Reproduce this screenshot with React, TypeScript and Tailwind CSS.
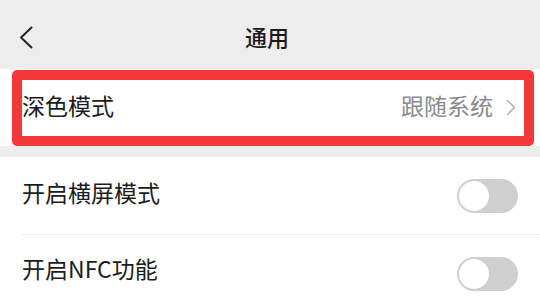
import React from 'react';

const font = { fontFamily: '"Noto Sans CJK SC", "Noto Sans", sans-serif' };

const Toggle: React.FC = () => (
  <div className="w-[61px] h-[34px] rounded-full bg-[#cfcfcf] p-[2px] flex items-center">
    <div className="w-[30px] h-[30px] rounded-full bg-white" />
  </div>
);

const SwitchRow: React.FC<{ label: string; lift: string }> = ({ label, lift }) => (
  <div className="h-[77px] flex items-center justify-between pl-[22px] pr-[22px]">
    <span className={`text-[23px] leading-none text-[#1c1c1c] ${lift}`}>{label}</span>
    <Toggle />
  </div>
);

export default function App() {
  return (
    <div className="w-[540px] h-[300px] bg-[#ededed] overflow-hidden" style={font}>
      {/* header */}
      <div className="relative h-[69px] flex items-center justify-center">
        <svg className="absolute left-[19px] top-[26px]" width="14" height="23" viewBox="0 0 14 23">
          <path d="M12.5 1.5 L2 11.5 L12.5 21.5" fill="none" stroke="#222" strokeWidth="2" strokeLinecap="round" strokeLinejoin="round" />
        </svg>
        <span className="text-[22px] font-medium text-[#1a1a1a] leading-none mt-[2px] mr-[6px]">通用</span>
      </div>

      {/* dark mode row, highlighted */}
      <div className="relative h-[77px] bg-white flex items-center justify-between pl-[22px] pr-[24px]">
        <span className="text-[23px] leading-none text-[#1c1c1c] mb-[4px]">深色模式</span>
        <div className="flex items-center gap-[13px]">
          <span className="text-[23px] leading-none text-[#8a8a8a] mb-[4px]">跟随系统</span>
          <svg width="10" height="17" viewBox="0 0 10 17">
            <path d="M1.5 1.5 L8.5 8.5 L1.5 15.5" fill="none" stroke="#b5b5b5" strokeWidth="1.6" strokeLinecap="round" strokeLinejoin="round" />
          </svg>
        </div>
        <div className="absolute left-[12px] right-[6px] top-[1px] bottom-0 border-[10px] border-[#f43839] rounded-[5px] pointer-events-none" />
      </div>

      <div className="h-[11px]" />

      <div className="bg-white">
        <SwitchRow label="开启横屏模式" lift="mb-[6px]" />
        <div className="ml-[22px] h-px bg-[#ececec]" />
        <SwitchRow label="开启NFC功能" lift="mb-[10px]" />
      </div>
    </div>
  );
}
